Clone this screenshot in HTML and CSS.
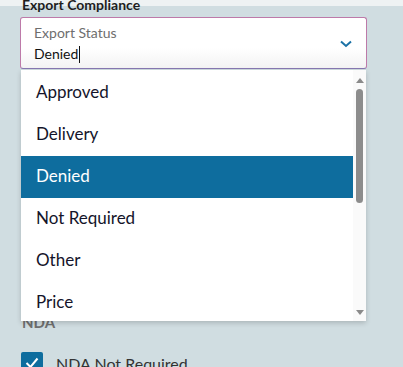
FILE: index.html
```html
<!DOCTYPE html>
<html lang="en">
<head>
  <meta charset="UTF-8" />
  <title>Export Compliance</title>
  <link rel="stylesheet" href="styles.css">
</head>
<body>

  <section class="field-group">
    <h3 class="group-title">Export Compliance</h3>
    <div class="combo">
      <div class="combo-input">
        <div class="combo-text">
          <span class="combo-label">Export Status</span>
          <span class="combo-value">Denied<span class="caret"></span></span>
        </div>
        <svg class="chevron" width="12" height="8" viewBox="0 0 12 8" aria-hidden="true">
          <path d="M1 1.5 L6 6 L11 1.5" fill="none" stroke="#1b72a6" stroke-width="2"/>
        </svg>
      </div>

      <div class="listbox" role="listbox">
        <ul class="options">
          <li>Approved</li>
          <li>Delivery</li>
          <li class="selected">Denied</li>
          <li>Not Required</li>
          <li>Other</li>
          <li>Price</li>
        </ul>
        <div class="scrollbar">
          <span class="arrow up"></span>
          <span class="thumb"></span>
          <span class="arrow down"></span>
        </div>
      </div>
    </div>
  </section>

  <section class="field-group nda">
    <h3 class="group-title muted">NDA</h3>
    <label class="check">
      <span class="box">
        <svg width="14" height="12" viewBox="0 0 14 12" aria-hidden="true">
          <path d="M1.5 6 L5.5 10 L12.5 1.5" fill="none" stroke="#fff" stroke-width="2"/>
        </svg>
      </span>
      NDA Not Required
    </label>
  </section>

</body>
</html>
```

FILE: styles.css
```css
html, body {
  margin: 0;
  padding: 0;
  overflow: hidden;
  height: 100%;
}
body {
  background: linear-gradient(#eef2f3 0, #eef2f3 6px, #d0dde1 6px);
  font-family: Lato, "Open Sans", sans-serif;
  color: #1c1c1c;
}
.field-group {
  padding-left: 20px;
  width: 347px;
}
.group-title {
  margin: -4px 0 0 2px;
  font-size: 14px;
  line-height: 18px;
  font-weight: 700;
  color: #1e1e1e;
}
.combo {
  position: relative;
  margin-top: 3px;
}
.combo-input {
  display: flex;
  align-items: center;
  justify-content: space-between;
  height: 50px;
  padding: 0 14px 0 13px;
  border: 1px solid #bd7aa9;
  border-bottom-color: #8878b2;
  border-radius: 3px;
  background: linear-gradient(#ffffff 0%, #ffffff 60%, #f3f3f3 100%);
}
.combo-text {
  display: flex;
  flex-direction: column;
  gap: 4px;
  padding-top: 1px;
}
.combo-label {
  font-size: 14px;
  line-height: 17px;
  color: #6e6e6e;
}
.combo-value {
  font-size: 14px;
  line-height: 18px;
  color: #111;
}
.caret {
  display: inline-block;
  width: 1px;
  height: 17px;
  margin-left: 1px;
  vertical-align: -4px;
  background: #111;
}
.chevron {
  margin-top: 2px;
}
.listbox {
  position: absolute;
  top: 53px;
  left: 1px;
  width: 345px;
  height: 251px;
  display: flex;
  background: #fff;
  box-shadow: 0 2px 5px rgba(0, 0, 0, 0.18);
  z-index: 10;
  overflow: hidden;
}
.options {
  flex: 1;
  list-style: none;
  margin: 0;
  padding: 2px 0 0;
}
.options li {
  height: 42px;
  line-height: 40px;
  padding-left: 15px;
  font-size: 17px;
  color: #14142a;
}
.options li.selected {
  background: #0e6d9e;
  color: #fff;
}
.scrollbar {
  width: 13px;
  background: #fafafa;
  display: flex;
  flex-direction: column;
  align-items: center;
  padding-top: 8px;
}
.arrow {
  width: 0;
  height: 0;
  border-left: 4px solid transparent;
  border-right: 4px solid transparent;
}
.arrow.up {
  border-bottom: 5px solid #8a8a8a;
}
.arrow.down {
  border-top: 5px solid #8a8a8a;
  margin-top: auto;
  margin-bottom: 6px;
}
.thumb {
  width: 7px;
  height: 114px;
  margin-top: 6px;
  border-radius: 4px;
  background: #8c8c8c;
}
.nda .group-title {
  margin-top: 244px;
  font-size: 15px;
}
.muted {
  color: #6f6f6f;
}
.check {
  display: flex;
  align-items: center;
  gap: 13px;
  margin-top: 21px;
  margin-left: 1px;
  font-size: 16px;
  color: #333;
}
.box {
  width: 22px;
  height: 22px;
  border-radius: 2px;
  background: #0e6d9e;
  display: flex;
  align-items: center;
  justify-content: center;
}
```
